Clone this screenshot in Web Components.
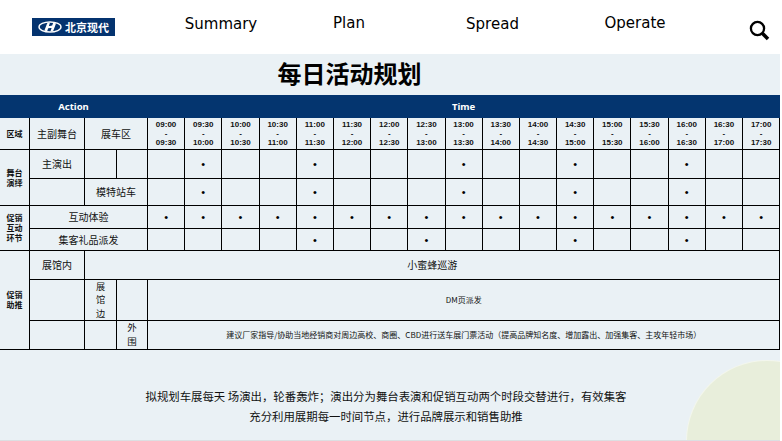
<!DOCTYPE html>
<html lang="zh-CN">
<head>
<meta charset="utf-8">
<style>
html,body{margin:0;padding:0;background:#fff;}
body{width:780px;height:441px;overflow:hidden;font-family:"Noto Sans CJK SC","Noto Sans",sans-serif;color:#000;}
</style>
</head>
<body>
<site-page>
  <site-header slot="header"></site-header>
  <page-title slot="title">每日活动规划</page-title>
  <schedule-table slot="table"></schedule-table>
  <page-notes slot="notes">
    <p>拟规划车展每天 场演出，轮番轰炸；演出分为舞台表演和促销互动两个时段交替进行，有效集客</p>
    <p>充分利用展期每一时间节点，进行品牌展示和销售助推</p>
  </page-notes>
</site-page>
<script>
function define(name, html, init){
  customElements.define(name, class extends HTMLElement{
    constructor(){super();this.attachShadow({mode:'open'}).innerHTML=html;if(init)init(this.shadowRoot,this);}
  });
}
define('site-page',`<style>
:host{display:block;width:780px;height:441px;position:relative;overflow:hidden;}
.body{background:#eaf1f5;height:386px;border-bottom:1px solid #dcdfe2;position:relative;overflow:hidden;box-sizing:content-box;}
.deco{position:absolute;left:687px;top:307px;width:160px;height:160px;border-radius:50%;background:#e8eedb;box-shadow:0 0 0 1px #f3f6ec;}
.content{position:relative;}
</style>
<slot name="header"></slot>
<div class="body"><div class="deco"></div><div class="content">
<slot name="title"></slot><slot name="table"></slot><slot name="notes"></slot>
</div></div>`);

define('brand-logo',`<style>
:host{display:flex;align-items:center;width:83px;height:18px;background:#04336f;box-sizing:border-box;padding-left:6px;gap:3px;}
svg{display:block;flex:none;}
span{font:700 11px/18px "Noto Sans CJK SC",sans-serif;color:#fff;white-space:nowrap;}
</style>
<svg width="24" height="12" viewBox="0 0 24 12"><ellipse cx="12" cy="6" rx="11" ry="5" fill="none" stroke="#fff" stroke-width="1.4"/><path d="M9.2 2.2 L12 1.4 L10.9 4.9 Q12.5 5.2 14.2 4.6 L15.3 1.6 L18 2.4 L15.3 9.7 L12.4 10.5 L13.6 7 Q12 6.7 10.2 7.3 L9.1 10.4 L6.4 9.6 Z" fill="#fff"/></svg>
<span>北京现代</span>`);

define('nav-link',`<style>
:host{display:block;text-align:center;font:15px/20px "DejaVu Sans",sans-serif;color:#000;}
</style><slot></slot>`);

define('search-icon',`<style>:host{display:block;width:24px;height:24px;}svg{display:block}</style>
<svg width="24" height="24" viewBox="0 0 24 24"><circle cx="9.5" cy="9.5" r="6.6" fill="none" stroke="#000" stroke-width="2.3"/><path d="M14.3 14.3 L20 20" stroke="#000" stroke-width="3.6" stroke-linecap="butt"/></svg>`);

define('site-header',`<style>
:host{display:flex;height:54px;background:#fff;}
.logo{width:157px;padding-left:32px;box-sizing:border-box;padding-top:18px;}
nav{display:grid;grid-template-columns:128px 128px 159px 126px;}
.low{padding-top:14px}.high{padding-top:13px}
.s{padding:18.5px 0 0 49.5px;}
</style>
<div class="logo"><brand-logo></brand-logo></div>
<nav><nav-link class="low">Summary</nav-link><nav-link class="high">Plan</nav-link><nav-link class="low">Spread</nav-link><nav-link class="high">Operate</nav-link></nav>
<div class="s"><search-icon></search-icon></div>`);

define('page-title',`<style>
:host{display:block;height:41px;box-sizing:border-box;padding-right:81px;text-align:center;font:700 24px/38px "Noto Sans CJK SC",sans-serif;color:#000;}
</style><slot></slot>`);

define('page-notes',`<style>
:host{display:block;padding:36px 8px 0 0;text-align:center;font:11.4px/20px "Noto Sans CJK SC",sans-serif;color:#111;}
::slotted(p){margin:0;}
</style><slot></slot>`);

define('schedule-table',`<style>
:host{display:block;width:780px;}
table{border-collapse:collapse;table-layout:fixed;width:780px;font:10px/12px "Noto Sans CJK SC",sans-serif;color:#111;}
td,th{border:1px solid #000;padding:0;text-align:center;vertical-align:middle;overflow:hidden;}
tr>:first-child{border-left:0;}
th{background:#04356f;color:#fff;font:700 9.5px/12px "Noto Sans","Noto Sans CJK SC",sans-serif;border-color:#04356f;}
th+th{border-left:1px solid #fff;}
.area{font-weight:700;font-size:8px;line-height:10px;}
.t{font:700 8px/9.2px "Liberation Sans",sans-serif;}
.d{font:11px/12px "Liberation Sans",sans-serif;color:#000;}
.sm{font-size:8px;}
.v3{font-size:9.2px;line-height:13.33px;}
.v2{font-size:9.5px;line-height:13.8px;}
</style>
<table><colgroup id="cg"></colgroup><tbody id="tb"></tbody></table>`, (root)=>{
  const cg=root.getElementById('cg');
  cg.innerHTML=[29.5,55,32,31].concat(Array(17).fill(37.2)).map(w=>`<col style="width:${w}px">`).join('');
  const slots=[];
  for(let i=0;i<17;i++){
    const m=540+i*30,f=x=>String(Math.floor(x/60)).padStart(2,'0')+':'+String(x%60).padStart(2,'0');
    slots.push(`<td class="t">${f(m)}<br>-<br>${f(m+30)}</td>`);
  }
  const dots=(idx)=>Array.from({length:17},(_,i)=>`<td class="d">${idx.includes(i)?'•':''}</td>`).join('');
  const all=Array.from({length:17},(_,i)=>i);
  const main=[1,4,8,11,14], gift=[4,7,11,14];
  const rows=[
   [22,`<th colspan="4">Action</th><th colspan="17">Time</th>`],
   [32,`<td class="area">区域</td><td>主副舞台</td><td colspan="2">展车区</td>`+slots.join('')],
   [29,`<td class="area" rowspan="2">舞台<br>演绎</td><td>主演出</td><td></td><td></td>`+dots(main)],
   [27,`<td></td><td colspan="2">模特站车</td>`+dots(main)],
   [23,`<td class="area" rowspan="2">促销<br>互动<br>环节</td><td colspan="3">互动体验</td>`+dots(all)],
   [22,`<td colspan="3">集客礼品派发</td>`+dots(gift)],
   [29,`<td class="area" rowspan="3">促销<br>助推</td><td>展馆内</td><td colspan="19">小蜜蜂巡游</td>`],
   [41,`<td></td><td class="v3">展<br>馆<br>边</td><td></td><td colspan="17" class="sm">DM页派发</td>`],
   [29,`<td></td><td></td><td class="v2">外<br>围</td><td colspan="17" class="sm">建议厂家指导/协助当地经销商对周边高校、商圈、CBD进行送车展门票活动（提高品牌知名度、增加露出、加强集客、主攻年轻市场）</td>`]
  ];
  root.getElementById('tb').innerHTML=rows.map(r=>`<tr style="height:${r[0]}px">${r[1]}</tr>`).join('');
});
</script>
</body>
</html>
